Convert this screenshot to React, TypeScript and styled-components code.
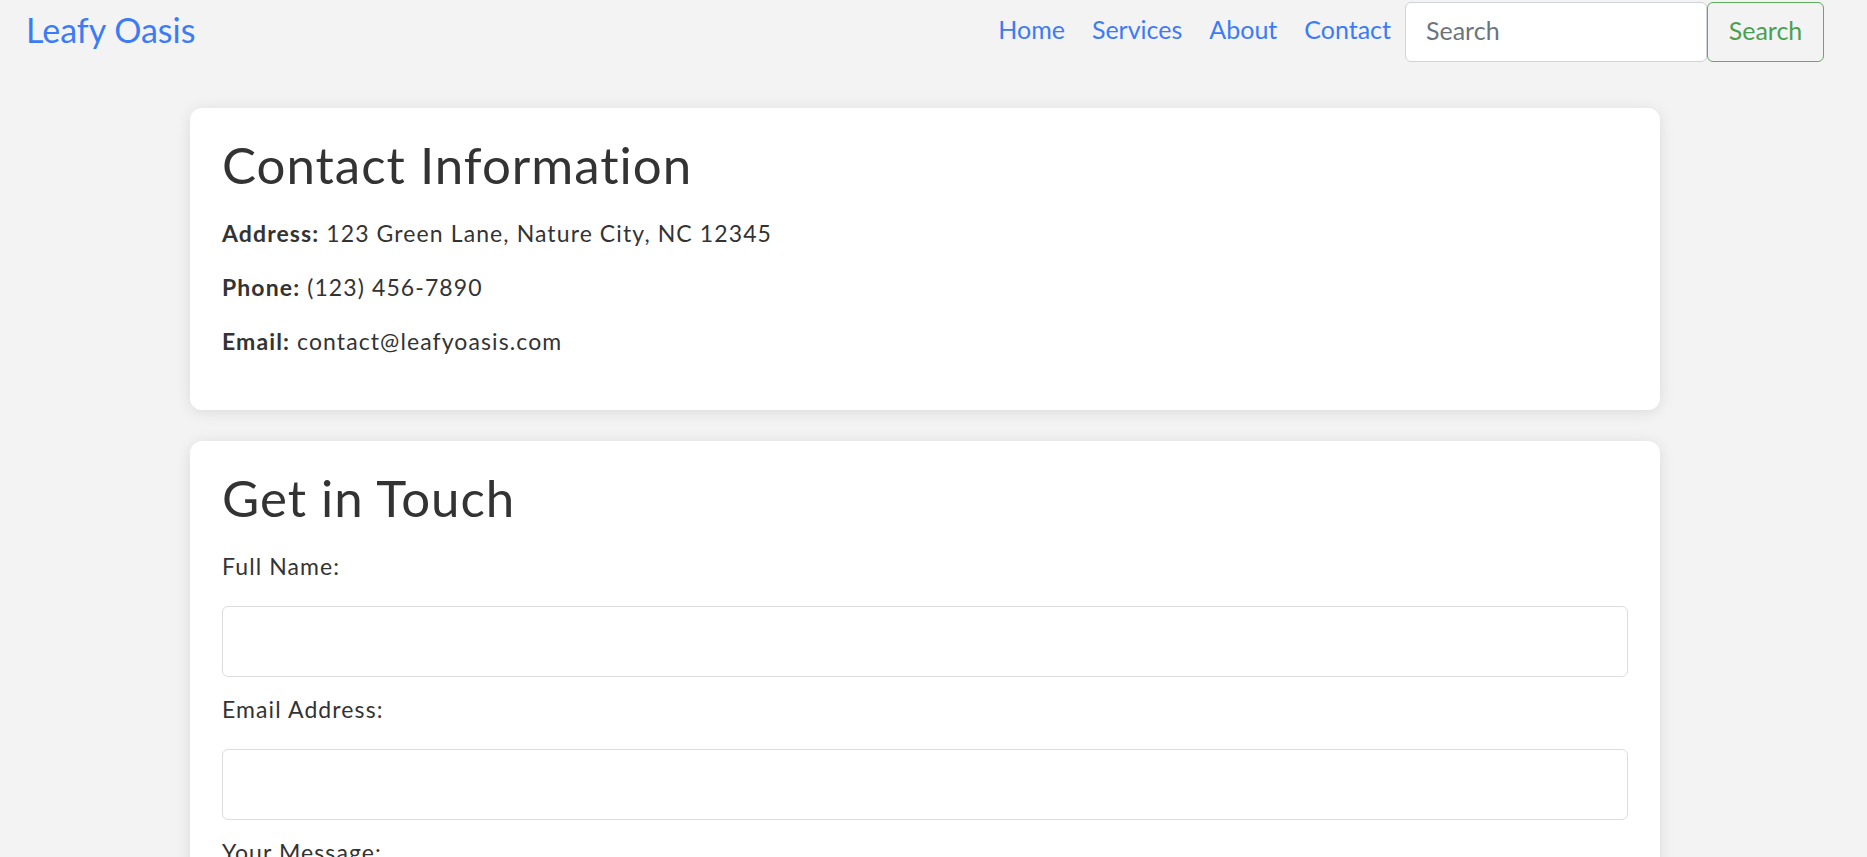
import React from 'react';
import styled, { createGlobalStyle } from 'styled-components';

const GlobalStyle = createGlobalStyle`
  body {
    margin: 0;
    background: #f3f3f3;
    font-family: Lato, "Noto Sans", sans-serif;
    color: #333;
  }
`

const Page = styled.div`
  max-width: 1850px;
`

const Navbar = styled.nav`
  display: flex;
  justify-content: space-between;
  align-items: center;
  padding: 2px 26px;
`

const Logo = styled.a`
  font-size: 34px;
  color: #3b7cf6;
  text-decoration: none;
  padding-bottom: 6px;
`

const NavRight = styled.div`
  display: flex;
  align-items: center;
`

const NavLinks = styled.ul`
  display: flex;
  list-style: none;
  margin: 0 14px 0 0;
  padding: 0;
  gap: 27px;
`

const NavLink = styled.a`
  display: block;
  font-size: 25px;
  color: #3b7cf6;
  text-decoration: none;
  padding-bottom: 6px;
`

const SearchInput = styled.input`
  width: 302px;
  height: 60px;
  box-sizing: border-box;
  padding: 0 20px 5px;
  font-family: inherit;
  font-size: 25px;
  color: #333;
  background: #fff;
  border: 1px solid #ced4da;
  border-radius: 6px;
  outline: none;

  &::placeholder {
    color: #6c757d;
  }
`

const SearchButton = styled.button`
  width: 117px;
  height: 60px;
  box-sizing: border-box;
  padding: 0 0 5px;
  font-family: inherit;
  font-size: 25px;
  color: #4c9f50;
  background: transparent;
  border: 1px solid #5cad5c;
  border-radius: 6px;
  cursor: pointer;
`

const Main = styled.main`
  display: flex;
  flex-direction: column;
  gap: 31px;
  max-width: 1470px;
  margin: 0 auto;
  padding: 44px 0 40px;
`

const Card = styled.section`
  background: #fff;
  border-radius: 12px;
  box-shadow: 0 2px 15px rgba(0, 0, 0, 0.1);
  padding: 26px 32px 31px;
`

const Heading = styled.h2`
  font-size: 51px;
  font-weight: 400;
  letter-spacing: 1px;
  line-height: 1.2;
  margin: 0 0 22px;
`

const InfoLine = styled.p`
  font-size: 23px;
  letter-spacing: 1.1px;
  line-height: 33px;
  margin: 0 0 21px;
`

const Label = styled.label`
  display: block;
  font-size: 23px;
  letter-spacing: 1.1px;
  line-height: 33px;
  margin-bottom: 23px;
`

const Field = styled.input`
  display: block;
  width: 100%;
  height: 71px;
  box-sizing: border-box;
  padding: 0 16px;
  font-family: inherit;
  font-size: 22px;
  border: 1px solid #ddd;
  border-radius: 6px;
  margin: 0 0 16px;
  outline: none;
`

const MessageField = styled.textarea`
  display: block;
  width: 100%;
  height: 160px;
  box-sizing: border-box;
  padding: 16px;
  font-family: inherit;
  font-size: 22px;
  border: 1px solid #ddd;
  border-radius: 6px;
  margin: 0 0 16px;
  resize: vertical;
`

const SubmitButton = styled.button`
  padding: 14px 28px;
  font-family: inherit;
  font-size: 22px;
  color: #fff;
  background: #4c9f50;
  border: none;
  border-radius: 6px;
  cursor: pointer;
`

const links = ['Home', 'Services', 'About', 'Contact']

const contactInfo = [
  { label: 'Address:', value: '123 Green Lane, Nature City, NC 12345' },
  { label: 'Phone:', value: '(123) 456-7890' },
  { label: 'Email:', value: 'contact@leafyoasis.com' },
]

function App() {
  return <Page>
    <GlobalStyle />
    <Navbar>
      <Logo href="#">Leafy Oasis</Logo>
      <NavRight>
        <NavLinks>
          {links.map(link => <li key={link}><NavLink href="#">{link}</NavLink></li>)}
        </NavLinks>
        <SearchInput type="search" placeholder="Search" />
        <SearchButton type="button">Search</SearchButton>
      </NavRight>
    </Navbar>
    <Main>
      <Card>
        <Heading>Contact Information</Heading>
        {contactInfo.map(item => <InfoLine key={item.label}>
          <strong>{item.label}</strong> {item.value}
        </InfoLine>)}
      </Card>
      <Card>
        <Heading>Get in Touch</Heading>
        <form onSubmit={e => e.preventDefault()}>
          <Label htmlFor="name">Full Name:</Label>
          <Field id="name" type="text" />
          <Label htmlFor="email">Email Address:</Label>
          <Field id="email" type="email" />
          <Label htmlFor="message">Your Message:</Label>
          <MessageField id="message" />
          <SubmitButton type="submit">Send Message</SubmitButton>
        </form>
      </Card>
    </Main>
  </Page>
}

export default App;
